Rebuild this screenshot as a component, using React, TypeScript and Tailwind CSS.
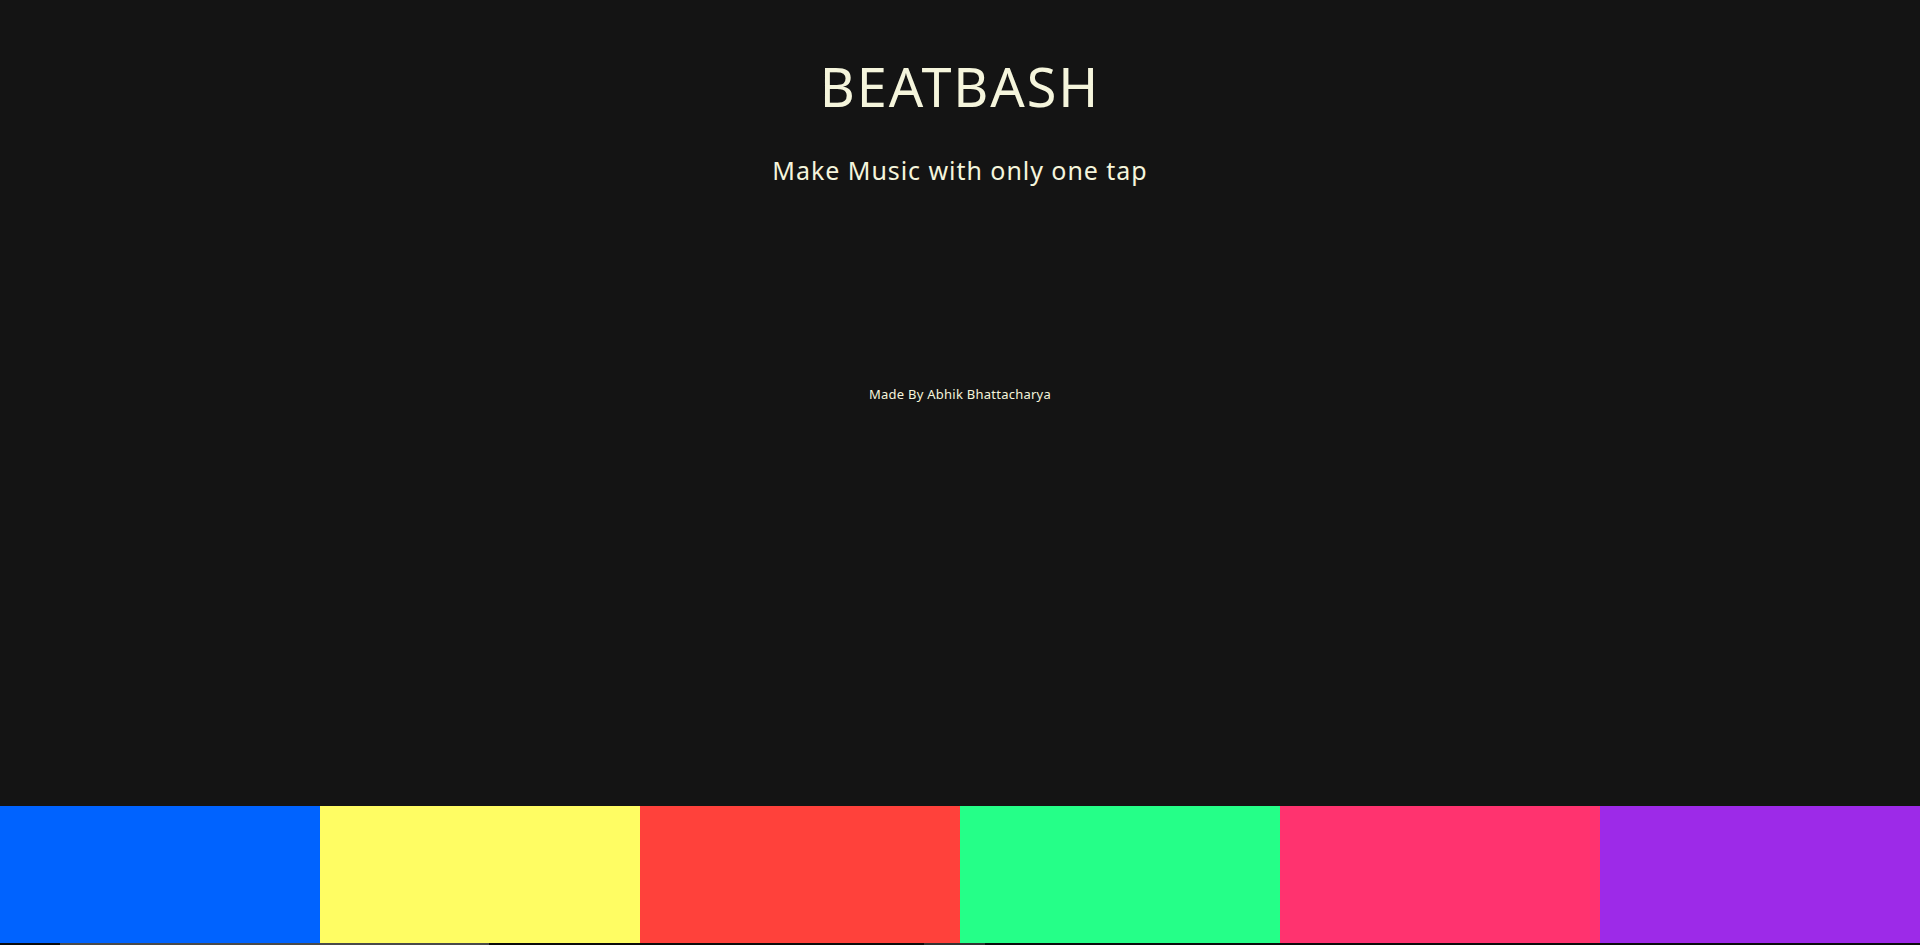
import React from "react";

export default function App() {
  return (
    <div
      className="h-[945px] w-full bg-[#141414] flex flex-col overflow-hidden text-[#f5f5dc]"
      style={{ fontFamily: '"Noto Sans", "Open Sans", sans-serif' }}
    >
      <div className="flex flex-col items-center">
        <h1 className="mt-[59px] text-[54px] leading-[54px] font-normal tracking-[1.9px]">BEATBASH</h1>
        <p className="mt-[45px] text-[25px] leading-[24px] tracking-[0.95px]">Make Music with only one tap</p>
        <p className="mt-[206px] text-[13px] leading-[13px] tracking-[0.25px]">Made By Abhik Bhattacharya</p>
      </div>
      <div className="flex-1" />
      <div className="flex h-[137px]">
        <div className="flex-1 bg-[#0063ff]" />
        <div className="flex-1 bg-[#fffd63]" />
        <div className="flex-1 bg-[#ff413b]" />
        <div className="flex-1 bg-[#25ff88]" />
        <div className="flex-1 bg-[#ff336f]" />
        <div className="flex-1 bg-[#9d2ae8]" />
      </div>
      <div className="flex h-[2px] bg-[#0c0c0c]">
        <div className="w-[60px]" />
        <div className="w-[429px] bg-[#4a4a4a]" />
        <div className="w-[435px]" />
        <div className="w-[61px] bg-[#333333]" />
      </div>
    </div>
  );
}
